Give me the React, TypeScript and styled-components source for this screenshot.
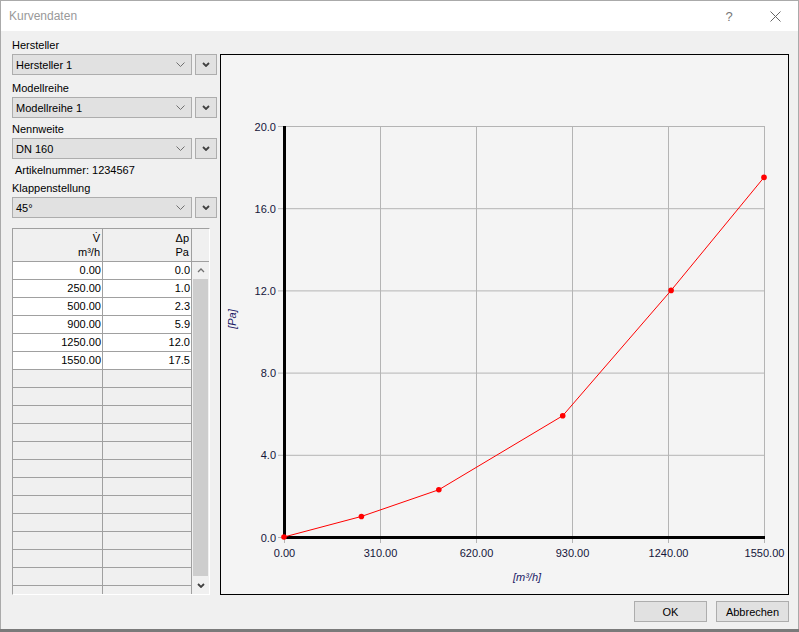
import React from 'react';
import styled, { createGlobalStyle } from 'styled-components';

const GlobalStyle = createGlobalStyle`
  html, body {
    margin: 0;
    padding: 0;
    background: #7a7a7a;
  }
  body {
    font-family: "Liberation Sans", Arial, sans-serif;
    font-size: 11px;
    color: #000;
  }
`;

const Window = styled.div`
  width: 799px;
  height: 629px;
  box-sizing: border-box;
  border: 1px solid #aaaaaa;
  border-bottom: none;
  background: #f0f0f0;
  display: flex;
  flex-direction: column;
`;

const TitleBar = styled.div`
  height: 30px;
  background: #ffffff;
  display: flex;
  align-items: center;
  padding-left: 8px;
`;

const Title = styled.span`
  font-size: 12px;
  color: #999999;
  flex: 1;
`;

const TitleButton = styled.div`
  width: 46px;
  height: 30px;
  display: flex;
  align-items: center;
  justify-content: center;
  color: #777777;
  font-size: 13px;
`;

const Body = styled.div`
  display: flex;
  gap: 3px;
  padding: 5px 9px 0 11px;
`;

const LeftCol = styled.div`
  width: 205px;
  display: flex;
  flex-direction: column;
`;

const Label = styled.div<{ $mt?: number }>`
  height: 18px;
  line-height: 18px;
  margin-top: ${(p) => p.$mt ?? 0}px;
`;

const Info = styled.div`
  height: 18px;
  line-height: 18px;
  margin-top: 2px;
  padding-left: 3px;
`;

const ComboRow = styled.div`
  display: flex;
  gap: 3px;
  height: 21px;
`;

const Combo = styled.div`
  width: 180px;
  box-sizing: border-box;
  border: 1px solid #adadad;
  background: #e1e1e1;
  display: flex;
  align-items: center;
  justify-content: space-between;
  padding: 0 6px 0 3px;
`;

const DropButton = styled.div`
  width: 22px;
  box-sizing: border-box;
  border: 1px solid #adadad;
  background: #e1e1e1;
  display: flex;
  align-items: center;
  justify-content: center;
`;

const Table = styled.div`
  margin-top: 10px;
  width: 198px;
  height: 367px;
  box-sizing: border-box;
  border-top: 1px solid #a0a0a0;
  border-left: 1px solid #a0a0a0;
  border-right: 1px solid #ffffff;
  border-bottom: 1px solid #ffffff;
  display: flex;
  flex-direction: column;
  overflow: hidden;
`;

const HeaderRow = styled.div`
  display: grid;
  grid-template-columns: 90px 89px 17px;
  height: 33px;
  box-sizing: border-box;
  border-bottom: 1px solid #a0a0a0;
  background: #f0f0f0;
`;

const HeadCell = styled.div<{ $line?: boolean }>`
  border-right: ${(p) => (p.$line ? '1px solid #a0a0a0' : 'none')};
  text-align: right;
  padding: 2px 2px 0 0;
  line-height: 14px;
`;

const TableBody = styled.div`
  flex: 1;
  display: flex;
  min-height: 0;
`;

const Rows = styled.div`
  width: 179px;
  overflow: hidden;
`;

const Row = styled.div<{ $filled: boolean }>`
  display: grid;
  grid-template-columns: 90px 89px;
  height: 18px;
  background: ${(p) => (p.$filled ? '#ffffff' : '#f0f0f0')};
`;

const Cell = styled.div`
  box-sizing: border-box;
  border-right: 1px solid #a0a0a0;
  border-bottom: 1px solid #a0a0a0;
  text-align: right;
  padding-right: 1px;
  line-height: 17px;
`;

const ScrollBar = styled.div`
  width: 17px;
  display: flex;
  flex-direction: column;
  background: #f0f0f0;
`;

const ScrollArrow = styled.div<{ $h: number }>`
  height: ${(p) => p.$h}px;
  display: flex;
  align-items: center;
  justify-content: center;
`;

const ScrollThumb = styled.div`
  flex: 1;
  margin-left: 1px;
  width: 15px;
  background: #cdcdcd;
`;

const ChartBox = styled.div`
  margin-top: 18px;
  width: 569px;
  height: 541px;
  box-sizing: border-box;
  border: 1px solid #000000;
  background: #f4f4f4;
`;

const Footer = styled.div`
  display: flex;
  justify-content: flex-end;
  gap: 9px;
  padding: 6px 9px 0 0;
`;

const Button = styled.div`
  width: 73px;
  height: 21px;
  box-sizing: border-box;
  border: 1px solid #adadad;
  background: #e1e1e1;
  display: flex;
  align-items: center;
  justify-content: center;
`;

const ThinChevron = () => (
  <svg width="9" height="5" viewBox="0 0 9 5">
    <polyline points="0.5,0.5 4.5,4.5 8.5,0.5" fill="none" stroke="#707070" strokeWidth="1" />
  </svg>
);

const BoldChevron = ({ up }: { up?: boolean }) => (
  <svg width="8" height="5" viewBox="0 0 8 5">
    <polyline
      points={up ? '1,4 4,1 7,4' : '1,1 4,4 7,1'}
      fill="none"
      stroke={up ? '#707070' : '#404040'}
      strokeWidth={up ? 1.3 : 1.8}
    />
  </svg>
);

const fields = [
  { label: 'Hersteller', value: 'Hersteller 1', mt: 0 },
  { label: 'Modellreihe', value: 'Modellreihe 1', mt: 4 },
  { label: 'Nennweite', value: 'DN 160', mt: 2 },
];

const data: [number, number][] = [
  [0, 0],
  [250, 1.0],
  [500, 2.3],
  [900, 5.9],
  [1250, 12.0],
  [1550, 17.5],
];

const Field = ({ label, value, mt }: { label: string; value: string; mt: number }) => (
  <>
    <Label $mt={mt}>{label}</Label>
    <ComboRow>
      <Combo>
        <span>{value}</span>
        <ThinChevron />
      </Combo>
      <DropButton>
        <BoldChevron />
      </DropButton>
    </ComboRow>
  </>
);

// chart geometry, relative to the inner box
const X0 = 63;
const XW = 480;
const Y0 = 482;
const YH = 411;
const px = (v: number) => X0 + (v / 1550) * XW;
const py = (p: number) => Y0 - (p / 20) * YH;

const Chart = () => {
  const xs = [0, 310, 620, 930, 1240, 1550];
  const ys = [0, 4, 8, 12, 16, 20];
  const pts = data.map(([v, p]) => `${px(v)},${py(p)}`).join(' ');
  return (
    <svg width="567" height="539" style={{ display: 'block' }}>
      {xs.map((v) => (
        <line key={'gx' + v} x1={px(v) + 0.5} x2={px(v) + 0.5} y1={py(20)} y2={Y0 + 6} stroke="#b4b4b4" />
      ))}
      {ys.map((p) => (
        <line key={'gy' + p} x1={X0 - 6} x2={px(1550) + 0.5} y1={py(p) + 0.5} y2={py(p) + 0.5} stroke="#b4b4b4" />
      ))}
      <line x1={X0 + 0.5} x2={X0 + 0.5} y1={py(20)} y2={Y0 + 2} stroke="#000" strokeWidth="3" />
      <line x1={X0 - 1} x2={px(1550) + 1} y1={Y0 + 0.5} y2={Y0 + 0.5} stroke="#000" strokeWidth="3" />
      <polyline points={pts} fill="none" stroke="#ff0000" strokeWidth="1" />
      {data.map(([v, p]) => (
        <circle key={v} cx={px(v)} cy={py(p)} r="2.8" fill="#ff0000" />
      ))}
      <g fontFamily='"Liberation Sans", Arial, sans-serif' fontSize="11" fill="#15153a">
        {ys.map((p) => (
          <text key={'ly' + p} x={X0 - 8} y={py(p) + 4.5} textAnchor="end">
            {p.toFixed(1)}
          </text>
        ))}
        {xs.map((v) => (
          <text key={'lx' + v} x={px(v) + 0.5} y={502} textAnchor="middle">
            {v.toFixed(2)}
          </text>
        ))}
        <text x={306} y={526} textAnchor="middle" fontStyle="italic" fill="#1a1a66">
          [m³/h]
        </text>
        <text x={19} y={268} textAnchor="middle" fontStyle="italic" fill="#1a1a66" transform="rotate(-90 15 268)">
          [Pa]
        </text>
      </g>
    </svg>
  );
};

export default function App() {
  const emptyRows = 13;
  return (
    <>
      <GlobalStyle />
      <Window>
        <TitleBar>
          <Title>Kurvendaten</Title>
          <TitleButton>?</TitleButton>
          <TitleButton>
            <svg width="11" height="11" viewBox="0 0 11 11">
              <path d="M0.5 0.5 L10.5 10.5 M10.5 0.5 L0.5 10.5" stroke="#666" strokeWidth="1" />
            </svg>
          </TitleButton>
        </TitleBar>
        <Body>
          <LeftCol>
            {fields.map((f) => (
              <Field key={f.label} {...f} />
            ))}
            <Info>Artikelnummer: 1234567</Info>
            <Field label="Klappenstellung" value="45°" mt={0} />
            <Table>
              <HeaderRow>
                <HeadCell $line>
                  V̇
                  <br />
                  m³/h
                </HeadCell>
                <HeadCell $line>
                  Δp
                  <br />
                  Pa
                </HeadCell>
                <HeadCell />
              </HeaderRow>
              <TableBody>
                <Rows>
                  {data.map(([v, p]) => (
                    <Row key={v} $filled>
                      <Cell>{v.toFixed(2)}</Cell>
                      <Cell>{p.toFixed(1)}</Cell>
                    </Row>
                  ))}
                  {Array.from({ length: emptyRows }).map((_, i) => (
                    <Row key={'e' + i} $filled={false}>
                      <Cell />
                      <Cell />
                    </Row>
                  ))}
                </Rows>
                <ScrollBar>
                  <ScrollArrow $h={17}>
                    <BoldChevron up />
                  </ScrollArrow>
                  <ScrollThumb />
                  <ScrollArrow $h={18}>
                    <BoldChevron />
                  </ScrollArrow>
                </ScrollBar>
              </TableBody>
            </Table>
          </LeftCol>
          <ChartBox>
            <Chart />
          </ChartBox>
        </Body>
        <Footer>
          <Button>OK</Button>
          <Button>Abbrechen</Button>
        </Footer>
      </Window>
    </>
  );
}
